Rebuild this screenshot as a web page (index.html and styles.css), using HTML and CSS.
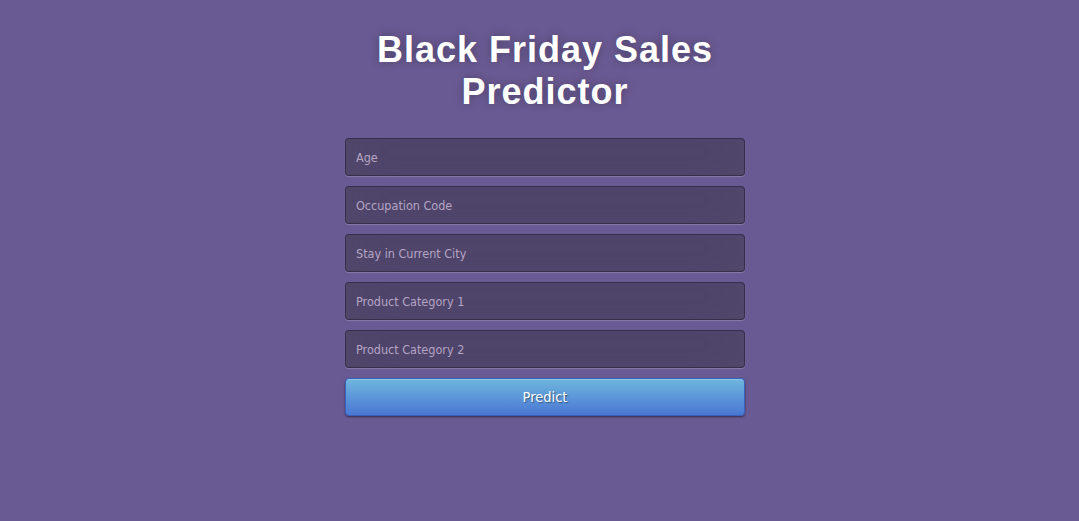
FILE: index.html
```html
<!DOCTYPE html>
<html>
<head>
<meta charset="utf-8">
<link rel="stylesheet" href="styles.css">
</head>
<body>
<div class="login">
  <h1 class="title">Black Friday Sales<br>Predictor</h1>
  <form class="form">
    <input class="field" type="text" placeholder="Age">
    <input class="field" type="text" placeholder="Occupation Code">
    <input class="field" type="text" placeholder="Stay in Current City">
    <input class="field" type="text" placeholder="Product Category 1">
    <input class="field" type="text" placeholder="Product Category 2">
    <button class="btn" type="button">Predict</button>
  </form>
</div>
</body>
</html>
```
FILE: styles.css
```css
html, body {
  margin: 0;
  padding: 0;
  height: 100%;
}
body {
  background: #6a5a93;
  font-family: "DejaVu Sans Condensed", "DejaVu Sans", Tahoma, sans-serif;
  display: flex;
  justify-content: center;
  padding-left: 11px;
  box-sizing: border-box;
}
.login {
  width: 400px;
  padding-top: 29px;
  display: flex;
  flex-direction: column;
  align-items: stretch;
}
.title {
  margin: 0 0 25px 0;
  color: #fff;
  font-family: "Liberation Sans", Arial, sans-serif;
  font-weight: bold;
  font-size: 36px;
  line-height: 42px;
  letter-spacing: 1px;
  text-align: center;
  text-shadow: 0 0 10px rgba(0,0,0,0.3);
}
.form {
  display: flex;
  flex-direction: column;
  gap: 10px;
  margin: 0;
}
.field {
  box-sizing: border-box;
  width: 100%;
  height: 38px;
  margin: 0;
  padding: 0 10px;
  background: rgba(0,0,0,0.27);
  border: 1px solid rgba(0,0,0,0.3);
  border-radius: 4px;
  outline: none;
  color: #fff;
  font-family: inherit;
  font-size: 12.5px;
  box-shadow: inset 0 -5px 45px rgba(100,100,100,0.2), 0 1px 1px rgba(255,255,255,0.2);
}
.field::placeholder {
  color: #b4a5c4;
}
.btn {
  box-sizing: border-box;
  width: 100%;
  height: 38px;
  margin: 0;
  border: 1px solid #3762bc;
  border-radius: 4px;
  background: linear-gradient(to bottom, #6eb6de, #4a77d4);
  color: #fff;
  font-family: inherit;
  font-size: 14.5px;
  text-shadow: 1px 1px 1px rgba(0,0,0,0.4);
  box-shadow: inset 0 1px 0 rgba(255,255,255,0.2), 0 1px 2px rgba(0,0,0,0.5);
  cursor: pointer;
}
```
